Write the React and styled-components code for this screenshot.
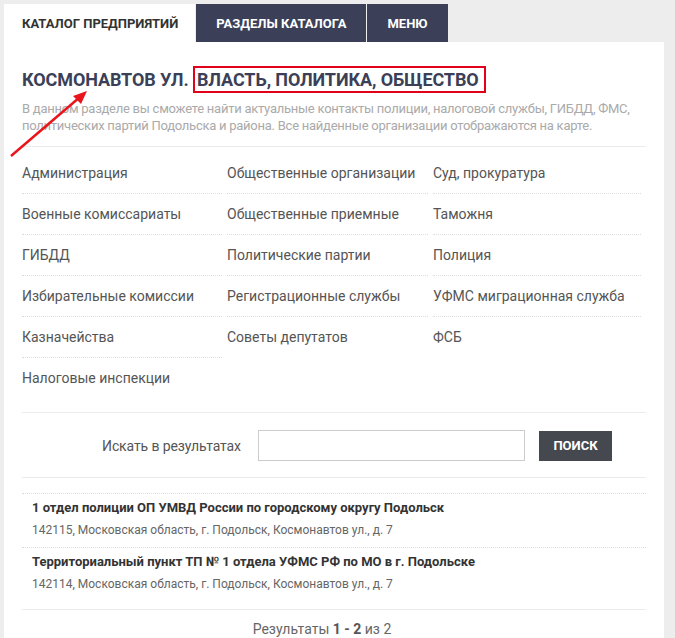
import React from 'react'
import styled, { createGlobalStyle } from 'styled-components'

const GlobalStyle = createGlobalStyle`
    body {
        margin: 0;
        background: #ededed;
        font-family: Roboto, "Liberation Sans", sans-serif;
    }
    * {
        box-sizing: border-box;
    }
`

const columns = [
    ['Администрация', 'Военные комиссариаты', 'ГИБДД', 'Избирательные комиссии', 'Казначейства', 'Налоговые инспекции'],
    ['Общественные организации', 'Общественные приемные', 'Политические партии', 'Регистрационные службы', 'Советы депутатов'],
    ['Суд, прокуратура', 'Таможня', 'Полиция', 'УФМС миграционная служба', 'ФСБ'],
]

const results = [
    {
        title: '1 отдел полиции ОП УМВД России по городскому округу Подольск',
        address: '142115, Московская область, г. Подольск, Космонавтов ул., д. 7',
    },
    {
        title: 'Территориальный пункт ТП № 1 отдела УФМС РФ по МО в г. Подольске',
        address: '142114, Московская область, г. Подольск, Космонавтов ул., д. 7',
    },
]

function App() {
    return (
        <Page>
            <GlobalStyle />
            <Tabs>
                <Tab active>Каталог предприятий</Tab>
                <Tab>Разделы каталога</Tab>
                <Tab>Меню</Tab>
            </Tabs>
            <Panel>
                <Title>
                    Космонавтов ул. <Marked>Власть, политика, общество</Marked>
                </Title>
                <Description>
                    В данном разделе вы сможете найти актуальные контакты полиции, налоговой службы, ГИБДД, ФМС,
                    политических партий Подольска и района. Все найденные организации отображаются на карте.
                </Description>
                <Categories>
                    {columns.map((col, i) => (
                        <Column key={i}>
                            {col.map((name) => (
                                <Category key={name}>{name}</Category>
                            ))}
                        </Column>
                    ))}
                </Categories>
                <SearchRow>
                    <SearchLabel>Искать в результатах</SearchLabel>
                    <SearchInput type="text" />
                    <SearchButton>Поиск</SearchButton>
                </SearchRow>
                <Results>
                    {results.map((r) => (
                        <Result key={r.title}>
                            <ResultTitle>{r.title}</ResultTitle>
                            <ResultAddress>{r.address}</ResultAddress>
                        </Result>
                    ))}
                </Results>
                <Pager>
                    Результаты <b>1 - 2</b> из 2
                </Pager>
            </Panel>
            <Arrow width="100" height="170" viewBox="0 0 100 170">
                <line x1="11" y1="156" x2="80" y2="97" stroke="#e8161c" strokeWidth="2.5" />
                <polygon points="87,91 73,96 81,104" fill="#e8161c" />
            </Arrow>
        </Page>
    )
}
export default App

const Page = styled.div`
    position: relative;
    padding: 4px 11px 0 4px;
    width: 675px;
`
const Tabs = styled.div`
    display: flex;
    gap: 1px;
`
const Tab = styled.div`
    height: 38px;
    display: flex;
    align-items: center;
    padding: ${(p) => (p.active ? '0 17px 0 18px' : '0 20px')};
    font-size: 13px;
    font-weight: 700;
    text-transform: uppercase;
    background: ${(p) => (p.active ? '#fff' : '#3b3f58')};
    color: ${(p) => (p.active ? '#333' : '#fff')};
`
const Panel = styled.div`
    background: #fff;
    padding: 24px 18px 0 18px;
    height: 596px;
    overflow: hidden;
`
const Title = styled.h1`
    margin: 0;
    font-size: 18px;
    line-height: 28px;
    font-weight: 700;
    letter-spacing: -0.1px;
    text-transform: uppercase;
    color: #3b3f58;
`
const Marked = styled.span`
    border: 2px solid #e2001a;
    padding: 1px 5px 1px 2px;
`
const Description = styled.p`
    margin: 6px 0 0;
    font-size: 13px;
    line-height: 17px;
    letter-spacing: -0.25px;
    color: #aaa;
    padding-bottom: 12px;
    border-bottom: 1px solid #ececec;
`
const Categories = styled.div`
    display: grid;
    grid-template-columns: 205px 206px 1fr;
    padding: 6px 0 14px;
    border-bottom: 1px solid #ececec;
`
const Column = styled.ul`
    list-style: none;
    margin: 0;
    padding: 0 5px 0 0;
`
const Category = styled.li`
    padding: 12px 0 11px;
    font-size: 14px;
    line-height: 17px;
    color: #555;
    border-bottom: 1px dotted #ddd;
    &:last-child {
        border-bottom: none;
    }
`
const SearchRow = styled.div`
    display: flex;
    align-items: center;
    padding: 17px 0 16px 80px;
    border-bottom: 1px solid #ececec;
`
const SearchLabel = styled.label`
    white-space: nowrap;
    font-size: 14px;
    letter-spacing: -0.1px;
    color: #555;
    margin-right: 17px;
`
const SearchInput = styled.input`
    width: 267px;
    height: 31px;
    border: 1px solid #ccc;
    outline: none;
    margin-right: 14px;
`
const SearchButton = styled.button`
    width: 73px;
    height: 30px;
    border: none;
    background: #45484f;
    color: #fff;
    font-family: Roboto, "Liberation Sans", sans-serif;
    font-size: 13px;
    font-weight: 700;
    text-transform: uppercase;
`
const Results = styled.div`
    margin-top: 15px;
    border-bottom: 1px solid #ececec;
    padding-bottom: 8px;
`
const Result = styled.div`
    padding: 3px 10px 6px;
    border-top: 1px dotted #ddd;
`
const ResultTitle = styled.div`
    font-size: 13px;
    line-height: 22px;
    font-weight: 700;
    color: #333;
`
const ResultAddress = styled.div`
    font-size: 12px;
    line-height: 22px;
    color: #666;
`
const Pager = styled.div`
    padding: 10px 24px 0 0;
    text-align: center;
    font-size: 14px;
    line-height: 18px;
    color: #666;
    b {
        color: #555;
    }
`
const Arrow = styled.svg`
    position: absolute;
    left: 0;
    top: 0;
`
